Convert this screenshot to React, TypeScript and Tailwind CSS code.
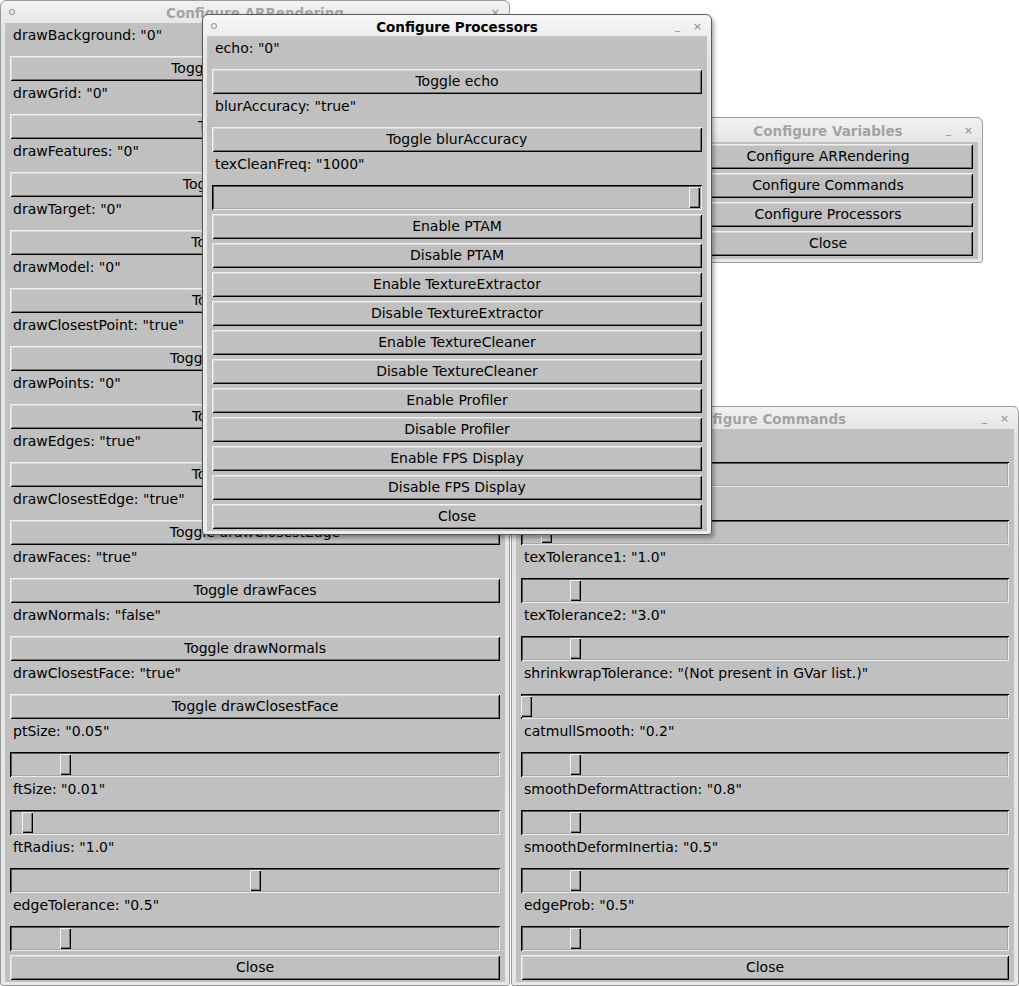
import type { ReactNode } from "react";

type Row =
  | { kind: "toggle"; name: string; value: string }
  | { kind: "slider"; name: string; value: string; pos: number };

const arRows: Row[] = [
  { kind: "toggle", name: "drawBackground", value: "0" },
  { kind: "toggle", name: "drawGrid", value: "0" },
  { kind: "toggle", name: "drawFeatures", value: "0" },
  { kind: "toggle", name: "drawTarget", value: "0" },
  { kind: "toggle", name: "drawModel", value: "0" },
  { kind: "toggle", name: "drawClosestPoint", value: "true" },
  { kind: "toggle", name: "drawPoints", value: "0" },
  { kind: "toggle", name: "drawEdges", value: "true" },
  { kind: "toggle", name: "drawClosestEdge", value: "true" },
  { kind: "toggle", name: "drawFaces", value: "true" },
  { kind: "toggle", name: "drawNormals", value: "false" },
  { kind: "toggle", name: "drawClosestFace", value: "true" },
  { kind: "slider", name: "ptSize", value: "0.05", pos: 50 },
  { kind: "slider", name: "ftSize", value: "0.01", pos: 12 },
  { kind: "slider", name: "ftRadius", value: "1.0", pos: 240 },
  { kind: "slider", name: "edgeTolerance", value: "0.5", pos: 50 },
];

const cmdRows: Row[] = [
  { kind: "slider", name: "edgeThreshold", value: "0.5", pos: 60 },
  { kind: "slider", name: "texThreshold", value: "0.1", pos: 20 },
  { kind: "slider", name: "texTolerance1", value: "1.0", pos: 49 },
  { kind: "slider", name: "texTolerance2", value: "3.0", pos: 49 },
  { kind: "slider", name: "shrinkwrapTolerance", value: "(Not present in GVar list.)", pos: 0 },
  { kind: "slider", name: "catmullSmooth", value: "0.2", pos: 49 },
  { kind: "slider", name: "smoothDeformAttraction", value: "0.8", pos: 49 },
  { kind: "slider", name: "smoothDeformInertia", value: "0.5", pos: 49 },
  { kind: "slider", name: "edgeProb", value: "0.5", pos: 49 },
];

const procRows: Row[] = [
  { kind: "toggle", name: "echo", value: "0" },
  { kind: "toggle", name: "blurAccuracy", value: "true" },
  { kind: "slider", name: "texCleanFreq", value: "1000", pos: 477 },
];

const procButtons = [
  "Enable PTAM",
  "Disable PTAM",
  "Enable TextureExtractor",
  "Disable TextureExtractor",
  "Enable TextureCleaner",
  "Disable TextureCleaner",
  "Enable Profiler",
  "Disable Profiler",
  "Enable FPS Display",
  "Disable FPS Display",
  "Close",
];

function FlButton({ label }: { label: string }) {
  return (
    <div className="h-[25px] shrink-0 flex items-center justify-center bg-[#c0c0c0] text-[14px] leading-[17px] text-black shadow-[inset_1px_1px_0_#f0f0f0,inset_-1px_-1px_0_#000,inset_2px_2px_0_#d8d8d8,inset_-2px_-2px_0_#6e6e6e]">
      {label}
    </div>
  );
}

function FlSlider({ pos }: { pos: number }) {
  return (
    <div className="relative h-[25px] shrink-0 bg-[#c0c0c0] shadow-[inset_1px_1px_0_#000,inset_-1px_-1px_0_#ececec,inset_2px_2px_0_#555,inset_-2px_-2px_0_#a8a8a8]">
      <div
        className="absolute top-[2px] bottom-[2px] w-[11px] bg-[#c0c0c0] shadow-[inset_1px_1px_0_#f0f0f0,inset_-1px_-1px_0_#000,inset_-2px_-2px_0_#7a7a7a]"
        style={{ left: pos }}
      />
    </div>
  );
}

function Label({ text }: { text: string }) {
  return (
    <div className="h-[33px] shrink-0 pt-[4px] pl-[3px] text-[14px] leading-[17px] text-black whitespace-nowrap">
      {text}
    </div>
  );
}

function Group({ row }: { row: Row }) {
  return (
    <>
      <Label text={`${row.name}: "${row.value}"`} />
      {row.kind === "toggle" ? (
        <FlButton label={`Toggle ${row.name}`} />
      ) : (
        <FlSlider pos={row.pos} />
      )}
    </>
  );
}

function TitleBar({
  title,
  active,
  className,
}: {
  title: string;
  active?: boolean;
  className: string;
}) {
  return (
    <div className={`relative shrink-0 flex items-center justify-center ${className}`}>
      <span className="absolute left-[8px] top-1/2 -translate-y-1/2 w-[6px] h-[6px] rounded-full border border-[#8c8c8c]" />
      <span
        className={`relative top-[2px] text-[13.5px] font-bold leading-none ${
          active ? "text-black" : "text-[#a3a3a3]"
        }`}
      >
        {title}
      </span>
      <span className="absolute right-[31px] top-1/2 -translate-y-1/2 text-[10px] leading-none text-[#8a8a8a]">
        _
      </span>
      <span className="absolute right-[9px] top-1/2 -translate-y-1/2 text-[11px] leading-none text-[#8a8a8a]">
        ×
      </span>
    </div>
  );
}

function Win({
  title,
  active,
  pos,
  titleH,
  children,
}: {
  title: string;
  active?: boolean;
  pos: string;
  titleH: string;
  children: ReactNode;
}) {
  return (
    <div
      className={`absolute flex flex-col rounded-t-[6px] rounded-b-[3px] border ${
        active
          ? "border-[#5a5a5a] bg-[linear-gradient(#f7f7f7,#e4e4e4_40px,#ececec)] shadow-[2px_3px_4px_rgba(0,0,0,0.35)]"
          : "border-[#9a9a9a] bg-[linear-gradient(#f2f2f2,#e2e2e2_30px,#e8e8e8)]"
      } ${pos}`}
    >
      <TitleBar title={title} active={active} className={titleH} />
      <div className="mx-[4px] mb-[3px] flex-1 flex flex-col bg-[#c0c0c0] px-[5px] overflow-hidden">
        {children}
      </div>
    </div>
  );
}

export default function App() {
  return (
    <div
      className="relative w-[1019px] h-[986px] overflow-hidden bg-white"
      style={{ fontFamily: '"DejaVu Sans", Verdana, sans-serif' }}
    >
      {/* Configure ARRendering */}
      <Win title="Configure ARRendering" pos="left-0 top-0 w-[510px] h-[986px]" titleH="h-[22px]">
        {arRows.map((r) => (
          <Group key={r.name} row={r} />
        ))}
        <div className="h-[4px] shrink-0" />
        <FlButton label="Close" />
      </Win>

      {/* Configure Commands */}
      <Win title="Configure Commands" pos="left-[511px] top-[406px] w-[508px] h-[580px]" titleH="h-[22px]">
        {cmdRows.map((r) => (
          <Group key={r.name} row={r} />
        ))}
        <div className="h-[4px] shrink-0" />
        <FlButton label="Close" />
      </Win>

      {/* Configure Variables */}
      <Win title="Configure Variables" pos="left-[673px] top-[117px] w-[310px] h-[146px]" titleH="h-[24px]">
        <div className="flex flex-col gap-[4px] pt-[2px]">
          <FlButton label="Configure ARRendering" />
          <FlButton label="Configure Commands" />
          <FlButton label="Configure Processors" />
          <FlButton label="Close" />
        </div>
      </Win>

      {/* Configure Processors */}
      <Win title="Configure Processors" active pos="left-[202px] top-[14px] w-[510px] h-[521px]" titleH="h-[21px]">
        {procRows.map((r) => (
          <Group key={r.name} row={r} />
        ))}
        <div className="flex flex-col gap-[4px] pt-[4px]">
          {procButtons.map((b) => (
            <FlButton key={b} label={b} />
          ))}
        </div>
      </Win>
    </div>
  );
}
